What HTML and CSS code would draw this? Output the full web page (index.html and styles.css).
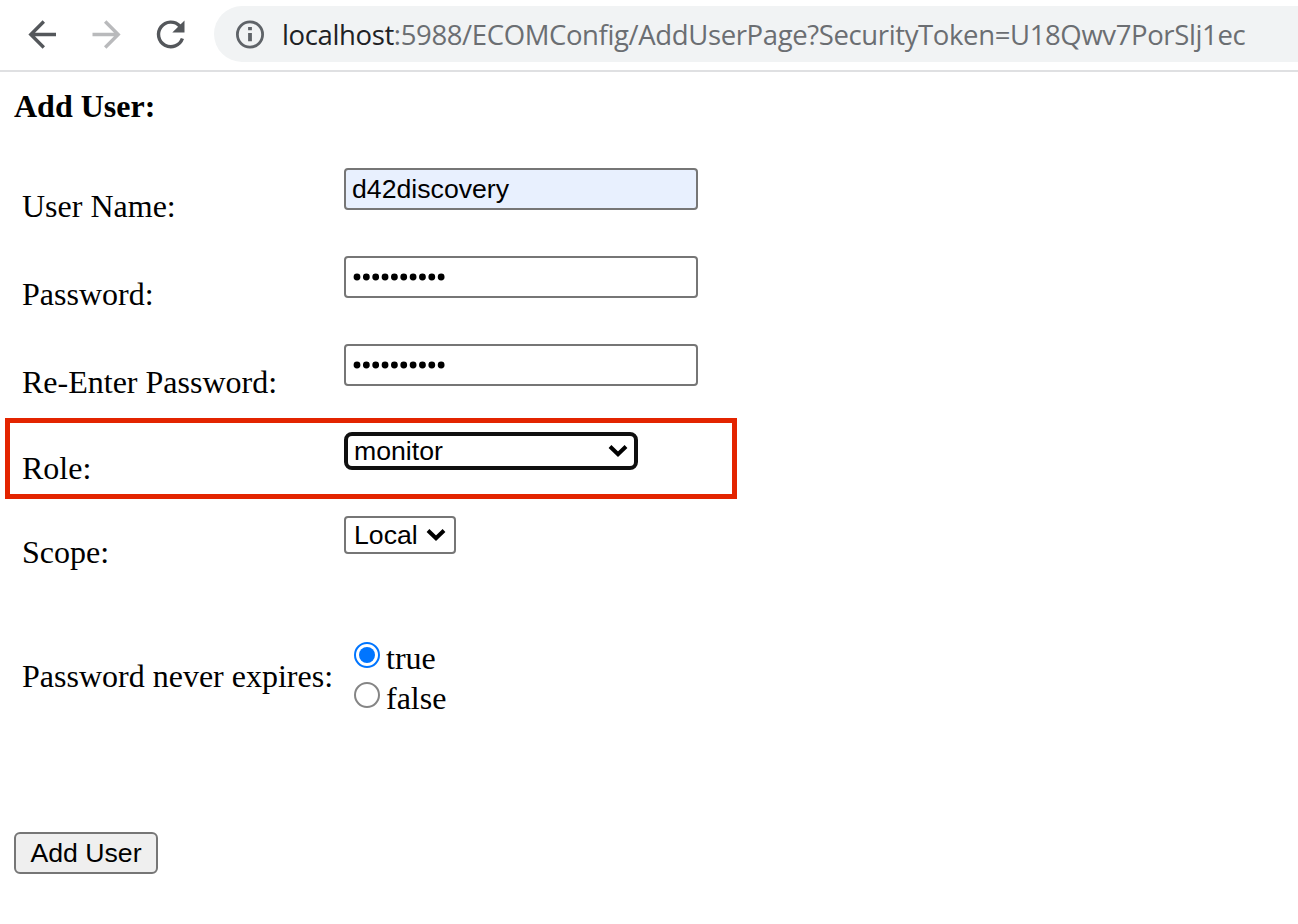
FILE: index.html
```html
<!DOCTYPE html>
<html lang="en">
<head>
<meta charset="utf-8">
<title>Add User</title>
<link rel="stylesheet" href="styles.css">
</head>
<body>
<header class="toolbar">
  <svg class="nav-icons" width="214" height="70" viewBox="0 0 214 70" fill="none" stroke-width="3.4">
    <path d="M56 34.5H31M43.8 21.5L30.8 34.5L43.8 47.5" stroke="#54575b"/>
    <path d="M92.500 34.500H118M105.200 21.500L118.200 34.500L105.200 47.500" stroke="#b9babc"/>
    <path d="M179.800 26A12.300 12.300 0 1 0 182.400 38.500" stroke="#54575b"/>
    <path d="M184.500 20.500V32.500H172.300Z" fill="#54575b"/>
  </svg>
  <div class="address">
    <svg class="info" width="30" height="30" viewBox="0 0 30 30" fill="none" stroke="#5f6368">
      <circle cx="15" cy="15.500" r="12.600" stroke-width="2.800"/>
      <path d="M15 14V22.300M15 8V11.300" stroke-width="3.800"/>
    </svg>
    <div class="url"><span class="host">localhost</span>:5988/ECOMConfig/AddUserPage?SecurityToken=U18Qwv7PorSlj1ec</div>
  </div>
</header>
<main class="page">
  <h1 class="title">Add User:</h1>
  <form class="form">
    <div class="row"><label class="label">User Name:</label><div class="field filled">d42discovery</div></div>
    <div class="row"><label class="label">Password:</label><div class="field"><svg class="dots" width="94" height="8"><path d="M4 4H93" stroke="#000" stroke-width="6.800" stroke-linecap="round" stroke-dasharray="0 9.350"/></svg></div></div>
    <div class="row"><label class="label">Re-Enter Password:</label><div class="field"><svg class="dots" width="94" height="8"><path d="M4 4H93" stroke="#000" stroke-width="6.800" stroke-linecap="round" stroke-dasharray="0 9.350"/></svg></div></div>
    <div class="row short"><label class="label">Role:</label><div class="select focused">monitor<svg class="chevron" width="20" height="14" viewBox="0 0 20 14"><path d="M2 2.500L10 10.300L18 2.500" fill="none" stroke="#000" stroke-width="4"/></svg></div><div class="highlight"></div></div>
    <div class="row short"><label class="label">Scope:</label><div class="select">Local<svg class="chevron" width="20" height="14" viewBox="0 0 20 14"><path d="M2 2.500L10 10.300L18 2.500" fill="none" stroke="#000" stroke-width="4"/></svg></div></div>
    <div class="row expiry">
      <label class="label">Password never expires:</label>
      <div class="options">
        <div class="option"><span class="radio checked"></span>true</div>
        <div class="option"><span class="radio"></span>false</div>
      </div>
    </div>
    <div class="submit">Add User</div>
  </form>
</main>
</body>
</html>
```
FILE: styles.css
```css
* { box-sizing: border-box; }
body {
  margin: 0;
  height: 924px;
  overflow: hidden;
  background: #fff;
  color: #000;
  font: 32px/36px "Liberation Serif", "Times New Roman", serif;
}
.toolbar {
  display: flex;
  height: 72px;
  border-bottom: 2px solid #dfe0e2;
}
.nav-icons { flex: none; }
.address {
  display: flex;
  align-items: center;
  flex: 1;
  height: 56px;
  margin-top: 6px;
  padding-left: 21px;
  border-radius: 28px 0 0 28px;
  background: #f1f3f4;
}
.info { flex: none; }
.url {
  margin-left: 17px;
  padding-top: 2px;
  white-space: nowrap;
  font: 27.500px/36px "Open Sans", "Noto Sans", sans-serif;
  letter-spacing: -0.375px;
  color: #6b6e72;
}
.host { color: #202124; }
.page { padding: 16px 14px 0; }
.title { margin: 0; font-size: 32px; line-height: 36px; }
.form { padding-top: 44px; }
.row {
  position: relative;
  display: grid;
  grid-template-columns: 322px auto;
  justify-content: start;
  align-items: start;
  height: 88px;
  padding-left: 8px;
}
.label { padding-top: 20px; white-space: nowrap; }
.short { height: 84px; }
.short .label { padding-top: 18px; }
.field, .select, .submit {
  display: flex;
  align-items: center;
  font-family: "Liberation Sans", Arial, sans-serif;
  font-size: 26.670px;
  line-height: 30px;
}
.field {
  width: 354px;
  height: 42px;
  padding-left: 6px;
  border: 2px solid #767676;
  border-radius: 4px;
}
.filled { background: #e8f0fe; }
.dots { margin-left: 1px; }
.select {
  height: 38px;
  gap: 8px;
  padding: 0 8px;
  border: 2px solid #767676;
  border-radius: 4px;
}
.focused {
  width: 294px;
  justify-content: space-between;
  padding: 0 6px;
  border: 4px solid #101010;
  border-radius: 8px;
}
.highlight {
  position: absolute;
  left: -9px;
  top: -14px;
  width: 732px;
  height: 81px;
  border: 5px solid #e32400;
}
.expiry { height: 192px; margin-top: 40px; }
.expiry .label { padding-top: 18px; }
.options { padding-left: 10px; }
.option { display: flex; gap: 6px; height: 40px; }
.radio {
  display: grid;
  place-items: center;
  width: 26px;
  height: 26px;
  margin-top: 2px;
  border: 2px solid #858585;
  border-radius: 50%;
}
.checked { border-color: #0075ff; }
.checked::after {
  content: "";
  width: 16px;
  height: 16px;
  border-radius: 50%;
  background: #0075ff;
}
.submit {
  justify-content: center;
  width: 144px;
  height: 42px;
  border: 2px solid #767676;
  border-radius: 6px;
  background: #efefef;
}
```
